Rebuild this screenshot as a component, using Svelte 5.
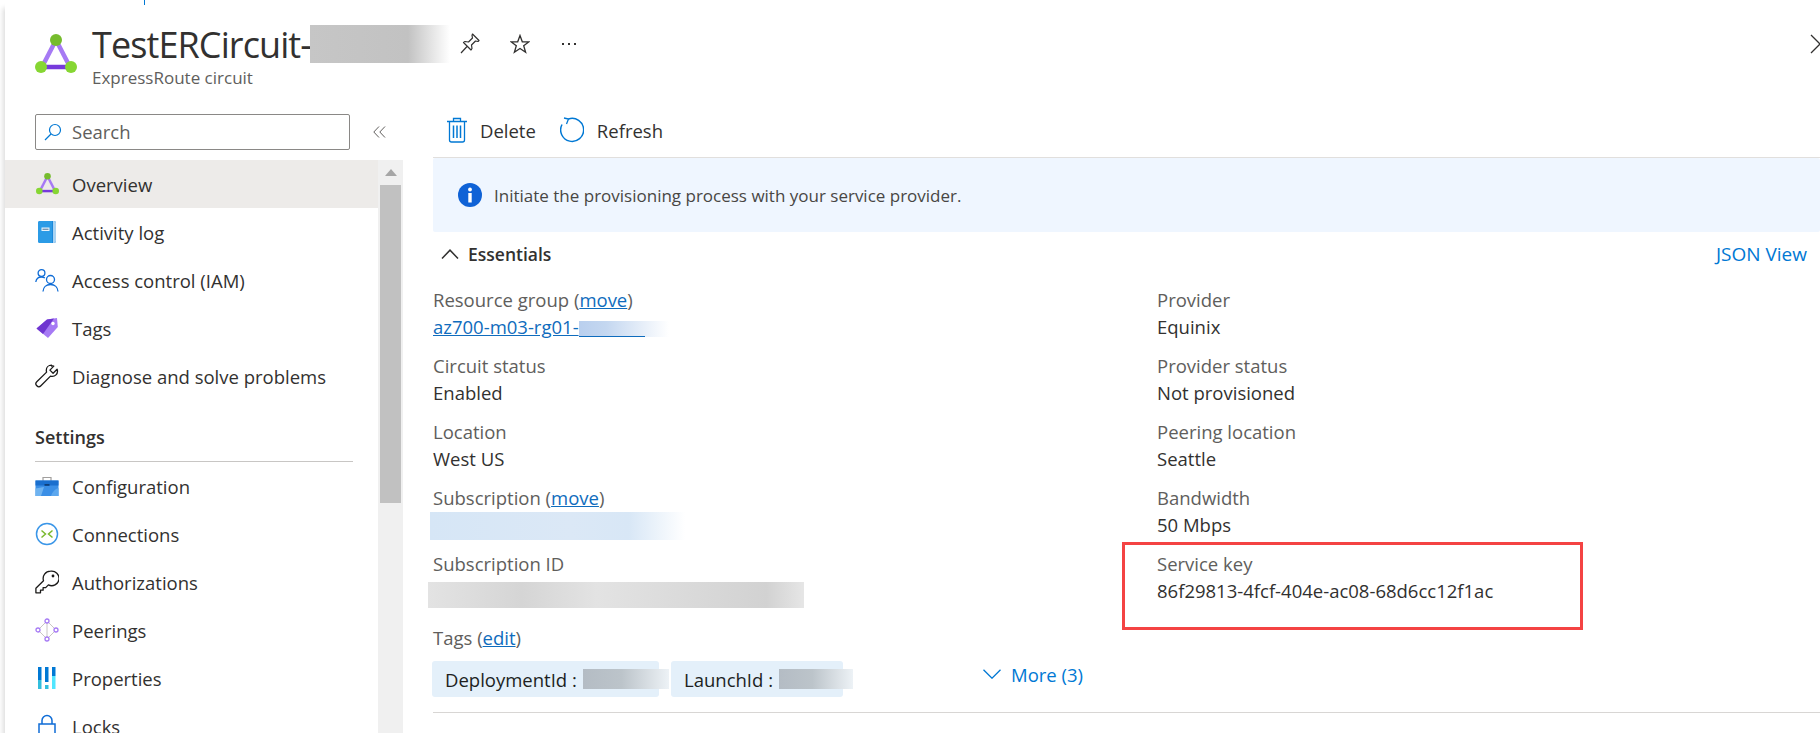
<script>
	const topNav = [
		{ id: "overview", label: "Overview", active: true },
		{ id: "activity", label: "Activity log" },
		{ id: "iam", label: "Access control (IAM)" },
		{ id: "tags", label: "Tags" },
		{ id: "diagnose", label: "Diagnose and solve problems" },
	];
	const settingsNav = [
		{ id: "config", label: "Configuration" },
		{ id: "connections", label: "Connections" },
		{ id: "key", label: "Authorizations" },
		{ id: "peerings", label: "Peerings" },
		{ id: "properties", label: "Properties" },
		{ id: "locks", label: "Locks" },
	];
	const rightFields = [
		{ label: "Provider", value: "Equinix" },
		{ label: "Provider status", value: "Not provisioned" },
		{ label: "Peering location", value: "Seattle" },
		{ label: "Bandwidth", value: "50 Mbps" },
	];
</script>

{#snippet triangle(size)}
	<svg width={size} height={size} viewBox="0 0 42 42">
		<path d="M21 6 7 33" stroke="#a67af4" stroke-width="4.5" />
		<path d="M21 6 35 33" stroke="#a67af4" stroke-width="4.5" />
		<path d="M7 33H35" stroke="#773adc" stroke-width="4.5" />
		<circle cx="21" cy="6" r="6" fill="#76bc2d" />
		<circle cx="6" cy="33" r="6" fill="#86d633" />
		<circle cx="36" cy="33" r="6" fill="#86d633" />
	</svg>
{/snippet}

{#snippet navIcon(id)}
	{#if id === "overview"}
		{@render triangle(23)}
	{:else if id === "activity"}
		<svg width="24" height="24" viewBox="0 0 24 24">
			<path d="M3 3a2 2 0 0 1 2-2h14a2 2 0 0 1 2 2v18a2 2 0 0 1-2 2H5a2 2 0 0 1-2-2z" fill="#1b87d9" />
			<path d="M19 1a2 2 0 0 1 2 2v18a2 2 0 0 1-2 2h-1V1z" fill="#a9d3f2" />
			<path d="M5 1h12v22H5a2 2 0 0 1-2-2V3a2 2 0 0 1 2-2z" fill="#2b9be6" />
			<rect x="6.5" y="7.5" width="8" height="3.5" fill="#e8f3fb" />
			<rect x="7.5" y="8.7" width="6" height="1.1" fill="#5b7fa0" />
		</svg>
	{:else if id === "iam"}
		<svg width="24" height="24" viewBox="0 0 24 24" fill="none" stroke="#0f6cd6" stroke-width="1.3">
			<circle cx="6.5" cy="5" r="3.4" />
			<path d="M0.8 14c.4-3 2.6-5 5.7-5 1.4 0 2.5.4 3.4 1" />
			<circle cx="15.5" cy="11.5" r="4" />
			<path d="M8 23.5c.2-4.200 3.200-7 7.500-7s7.300 2.800 7.500 7" />
		</svg>
	{:else if id === "tags"}
		<svg width="24" height="24" viewBox="0 0 24 24">
			<path d="M1.500 12.500 12 3.500l10 -1.500.800 9L13 22z" fill="#a67af4" />
			<path d="M1.500 12.500 12 3.500l7-1-11 15.500z" fill="#6f35d0" />
			<circle cx="18" cy="7.500" r="1.700" fill="#fff" />
		</svg>
	{:else if id === "diagnose"}
		<svg width="24" height="24" viewBox="0 0 24 24" fill="none" stroke="#1b1a19" stroke-width="1.300" stroke-linejoin="round">
			<path d="M16.500 1.200c-3 0-5.200 2.300-5.200 5.100 0 .7.100 1.200.3 1.800L1.800 17.700a2.900 2.900 0 0 0 0 4.100 2.900 2.900 0 0 0 4.100 0l9.600-9.700c.6.200 1.200.3 1.800.3 2.900 0 5.200-2.300 5.200-5.200 0-.7-.1-1.300-.4-1.900l-4 3.900-3.200-3.100 3.900-4c-.6-.2-1.300-.2-2.300-.1z" />
		</svg>
	{:else if id === "config"}
		<svg width="24" height="24" viewBox="0 0 24 24">
			<path d="M8 7V3.500h8V7" fill="none" stroke="#a19f9d" stroke-width="1.200" />
			<rect x="0.500" y="6.500" width="23" height="15.500" fill="#3b8fe6" />
			<rect x="0.500" y="6.500" width="23" height="5" fill="#1a6fce" />
			<path d="M0.500 14.500 9 13l-3 9H0.500z" fill="#6fb3f0" />
			<path d="M16 22c1-4 4-7 7.500-8v8z" fill="#5ca7ee" />
			<rect x="9.500" y="10" width="5" height="1.800" fill="#0f3f78" />
		</svg>
	{:else if id === "connections"}
		<svg width="24" height="24" viewBox="0 0 24 24" fill="none">
			<circle cx="12" cy="12" r="10.500" stroke="#3a96e8" stroke-width="1.500" />
			<path d="M6.500 8.500 10.500 12l-4 3.500M17.500 8.500 13.500 12l4 3.500" stroke="#7ab82e" stroke-width="1.500" />
		</svg>
	{:else if id === "key"}
		<svg width="24" height="24" viewBox="0 0 24 24" fill="none" stroke="#1b1a19" stroke-width="1.300" stroke-linejoin="round">
			<path d="M15.500 1.200a7.300 7.300 0 0 0-7 9.500L.9 18.300v4.500h4.600v-2.600h2.600v-2.600h2.600l2.700-2.700a7.300 7.300 0 1 0 2.100-13.700z" />
			<circle cx="18" cy="6" r="1.400" fill="#1b1a19" stroke="none" />
		</svg>
	{:else if id === "peerings"}
		<svg width="24" height="24" viewBox="0 0 24 24" fill="none">
			<path d="M12 3 3 12l9 9 9-9zM12 3v18" stroke="#c8c6c4" stroke-width="1" />
			<g stroke="#a67af4" stroke-width="1.300" fill="#fff">
				<circle cx="12" cy="3" r="2" />
				<circle cx="3" cy="12" r="2" />
				<circle cx="21" cy="12" r="2" />
				<circle cx="12" cy="21" r="2" />
			</g>
		</svg>
	{:else if id === "properties"}
		<svg width="24" height="24" viewBox="0 0 24 24">
			<rect x="3" y="1" width="3.500" height="13" fill="#0078d4" />
			<rect x="3" y="14" width="3.500" height="9" fill="#32bedd" />
			<rect x="10" y="1" width="3.500" height="15" fill="#0078d4" />
			<rect x="10" y="19" width="3.500" height="4" fill="#32bedd" />
			<rect x="17" y="1" width="3.500" height="9" fill="#0078d4" />
			<rect x="17" y="10" width="3.500" height="13" fill="#50e6ff" />
		</svg>
	{:else if id === "locks"}
		<svg width="24" height="24" viewBox="0 0 24 24" fill="none" stroke="#0f6cd6" stroke-width="1.500">
			<path d="M7 10V6.500a5 5 0 0 1 10 0V10" />
			<rect x="4" y="10" width="16" height="13" />
		</svg>
	{/if}
{/snippet}

{#snippet navRow(item)}
	<div class="nav-row" class:active={item.active}>
		<span class="nav-icon">{@render navIcon(item.id)}</span>
		<span>{item.label}</span>
	</div>
{/snippet}

<div class="page">
	<span class="crumb-tick"></span>

	<header class="header">
		<span class="logo">{@render triangle(42)}</span>
		<div class="heading">
			<div class="title-row">
				<h1>TestERCircuit-</h1>
				<span class="smudge title-smudge"></span>
				<svg class="pin" width="20" height="22" viewBox="0 0 20 22" fill="none" stroke="#323130" stroke-width="1.200" stroke-linejoin="round">
					<path d="M12.500 1 19 7.500l-1 1-2.500-.5-4 4 .5 3.500-1 1.500L3.500 9.500l1.500-1 3.500.5 4-4-.5-2.500zM7 13.500l-6 6.500" />
				</svg>
				<svg class="star" width="20" height="20" viewBox="0 0 20 20" fill="none" stroke="#323130" stroke-width="1.300" stroke-linejoin="miter">
					<path d="M10 1.500 12.300 7.800H19L13.700 11.800 15.600 18.300 10 14.500 4.400 18.300 6.300 11.800 1 7.800H7.700z" />
				</svg>
				<span class="dots"><i></i><i></i><i></i></span>
			</div>
			<div class="subtitle">ExpressRoute circuit</div>
		</div>
		<svg class="close" width="10" height="20" viewBox="0 0 10 20" fill="none" stroke="#323130" stroke-width="1.300">
			<path d="M1 1 10 10M1 19 10 10" />
		</svg>
	</header>

	<div class="body">
		<aside class="sidebar">
			<div class="search-row">
				<div class="search">
					<svg width="18" height="18" viewBox="0 0 18 18" fill="none" stroke="#0078d4" stroke-width="1.200">
						<circle cx="11" cy="7" r="5.500" />
						<path d="M7 11 1 17" />
					</svg>
					<span>Search</span>
				</div>
				<svg class="collapse" width="13" height="12" viewBox="0 0 13 12" fill="none" stroke="#605e5c" stroke-width="1">
					<path d="M6 .5 .8 6 6 11.500M12 .5 6.800 6 12 11.500" />
				</svg>
			</div>
			<div class="nav-wrap">
				<nav class="nav">
					{#each topNav as item}
						{@render navRow(item)}
					{/each}
					<div class="section">Settings</div>
					{#each settingsNav as item}
						{@render navRow(item)}
					{/each}
				</nav>
				<div class="scrollbar">
					<span class="arrow"></span>
					<span class="thumb"></span>
				</div>
			</div>
		</aside>

		<main class="main">
			<div class="toolbar">
				<button>
					<svg width="20" height="26" viewBox="0 0 20 26" fill="none" stroke="#0078d4" stroke-width="1.300">
						<path d="M0 4.500H20M6.500 4.500V1.500H13.500V4.500M2.500 4.500V23a2 2 0 0 0 2 2H15.500a2 2 0 0 0 2-2V4.500" />
						<path d="M6.500 8.500V21M10 8.500V21M13.500 8.500V21" stroke-width="1.500" />
					</svg>
					Delete
				</button>
				<button>
					<svg width="24" height="26" viewBox="0 0 24 26" fill="none" stroke="#0078d4" stroke-width="1.500">
						<path d="M8.500 2A11.500 11.500 0 1 1 2 7.500" />
						<path d="M4 1 8.500 2 6.500 7" stroke-width="1.300" />
					</svg>
					Refresh
				</button>
			</div>

			<div class="banner">
				<svg width="24" height="24" viewBox="0 0 24 24">
					<circle cx="12" cy="12" r="12" fill="#0f62d6" />
					<circle cx="12" cy="6.500" r="1.900" fill="#fff" />
					<rect x="10.300" y="10" width="3.400" height="9.500" fill="#fff" />
				</svg>
				Initiate the provisioning process with your service provider.
			</div>

			<div class="essentials-head">
				<svg width="18" height="10" viewBox="0 0 18 10" fill="none" stroke="#323130" stroke-width="1.500">
					<path d="M1 9.500 9 1.200l8 8.300" />
				</svg>
				<strong>Essentials</strong>
				<a class="json" href="#json">JSON View</a>
			</div>

			<div class="columns">
				<div class="column">
					<div class="field">
						<div class="label">Resource group (<a href="#move">move</a>)</div>
						<div class="value"><a class="rg" href="#rg">az700-m03-rg01-<span class="rg-smudge"></span></a></div>
					</div>
					<div class="field">
						<div class="label">Circuit status</div>
						<div class="value">Enabled</div>
					</div>
					<div class="field">
						<div class="label">Location</div>
						<div class="value">West US</div>
					</div>
					<div class="field">
						<div class="label">Subscription (<a href="#move">move</a>)</div>
						<div class="smudge sub-smudge"></div>
					</div>
					<div class="field">
						<div class="label">Subscription ID</div>
						<div class="smudge subid-smudge"></div>
					</div>
				</div>
				<div class="column">
					{#each rightFields as field}
						<div class="field">
							<div class="label">{field.label}</div>
							<div class="value">{field.value}</div>
						</div>
					{/each}
					<div class="field boxed">
						<div class="label">Service key</div>
						<div class="value">86f29813-4fcf-404e-ac08-68d6cc12f1ac</div>
						<span class="highlight"></span>
					</div>
				</div>
			</div>

			<div class="label tags-label">Tags (<a href="#edit">edit</a>)</div>
			<div class="tags">
				<span class="tag tag-deploy">DeploymentId :<span class="tag-smudge"></span></span>
				<span class="tag tag-launch">LaunchId :<span class="tag-smudge"></span></span>
				<a class="more" href="#more">
					<svg width="18" height="10" viewBox="0 0 18 10" fill="none" stroke="#0078d4" stroke-width="1.300">
						<path d="M.5 .8 9 9.200 17.500 .8" />
					</svg>
					More (3)
				</a>
			</div>
			<div class="rule"></div>
		</main>
	</div>
</div>

<style>
	:global(body) {
		margin: 0;
		background: #fff;
		font-family: "Open Sans", "Liberation Sans", sans-serif;
		color: #323130;
		overflow: hidden;
	}

	.page {
		position: relative;
		height: 733px;
		margin-left: 5px;
		overflow: hidden;
		background: #fff;
		box-shadow: -2px 8px 5px rgba(0, 0, 0, 0.14);
		font-size: 18.500px;
	}

	.crumb-tick {
		position: absolute;
		left: 139px;
		top: 0;
		width: 1px;
		height: 5px;
		background: #0078d4;
	}

	.header {
		display: flex;
		height: 100px;
		padding-left: 30px;
		box-sizing: border-box;
	}

	.logo {
		margin-top: 34px;
		width: 57px;
		height: 42px;
	}

	.title-row {
		display: flex;
		align-items: center;
		height: 44px;
		margin-top: 22px;
	}

	h1 {
		margin: 0;
		font-size: 36px;
		font-weight: 400;
		letter-spacing: -0.9px;
		color: #323130;
		width: 218px;
		white-space: nowrap;
	}

	.smudge {
		display: block;
	}

	.title-smudge {
		width: 140px;
		height: 38px;
		background: linear-gradient(90deg, #c6c6c6 0%, #c2c2c2 70%, #ffffff 100%);
	}

	.pin {
		margin-left: 10px;
	}

	.star {
		margin-left: 30px;
	}

	.dots {
		display: flex;
		gap: 4px;
		margin-left: 32px;
	}

	.dots i {
		width: 2px;
		height: 2px;
		background: #323130;
	}

	.subtitle {
		font-size: 17px;
		color: #605e5c;
	}

	.close {
		position: absolute;
		right: 0;
		top: 34px;
	}

	.body {
		display: flex;
	}

	.sidebar {
		width: 398px;
		flex: none;
	}

	.search-row {
		display: flex;
		align-items: center;
		gap: 23px;
		padding: 14px 0 10px 30px;
	}

	.search {
		display: flex;
		align-items: center;
		gap: 10px;
		width: 315px;
		height: 36px;
		box-sizing: border-box;
		padding: 0 0 1px 8px;
		border: 1px solid #8a8886;
		border-radius: 2px;
		color: #605e5c;
		line-height: 32px;
	}

	.nav-wrap {
		display: flex;
	}

	.nav {
		width: 373px;
	}

	.nav-row {
		display: flex;
		align-items: center;
		gap: 13px;
		height: 48px;
		padding-left: 30px;
	}

	.nav-row.active {
		background: #edebe9;
	}

	.nav-icon {
		display: flex;
		align-items: center;
		justify-content: center;
		width: 24px;
		height: 24px;
	}

	.section {
		height: 60px;
		margin: 2px 25px 0 30px;
		box-sizing: border-box;
		padding-top: 23px;
		line-height: 25px;
		border-bottom: 1px solid #c8c6c4;
		font-weight: 600;
		font-size: 18px;
	}

	.scrollbar {
		display: flex;
		flex-direction: column;
		align-items: center;
		width: 25px;
		background: #f0f0f0;
	}

	.arrow {
		margin-top: 9px;
		border: 6px solid transparent;
		border-top: 0;
		border-bottom: 7px solid #a6a6a6;
	}

	.thumb {
		width: 21px;
		height: 318px;
		margin-top: 9px;
		background: #c1c1c1;
	}

	.main {
		flex: 1;
		min-width: 0;
		padding-left: 30px;
	}

	.toolbar {
		display: flex;
		align-items: center;
		height: 58px;
		box-sizing: border-box;
		padding: 3px 0 0 14px;
		border-bottom: 1px solid #e1dfdd;
		gap: 24px;
	}

	button {
		display: flex;
		align-items: center;
		gap: 13px;
		padding: 0;
		border: 0;
		background: none;
		font: inherit;
		color: #323130;
	}

	.banner {
		display: flex;
		align-items: center;
		gap: 12px;
		height: 74px;
		padding-left: 25px;
		background: #eff6ff;
		border-radius: 2px;
		font-size: 17px;
		color: #484644;
	}

	.essentials-head {
		display: flex;
		align-items: center;
		height: 44px;
		padding-left: 8px;
		gap: 9px;
	}

	.essentials-head strong {
		font-weight: 600;
		font-size: 17.500px;
	}

	a {
		color: #0f6cbd;
	}

	.json {
		margin-left: auto;
		margin-right: 13px;
		font-size: 19px;
		text-decoration: none;
		color: #0078d4;
	}

	.columns {
		display: flex;
		margin-top: 10px;
	}

	.column {
		flex: none;
		width: 724px;
	}

	.field {
		position: relative;
		height: 66px;
	}

	.label {
		height: 27px;
		line-height: 27px;
		color: #605e5c;
	}

	.value {
		height: 27px;
		line-height: 27px;
		color: #323130;
	}

	.rg {
		display: inline-block;
		white-space: nowrap;
	}

	.rg-smudge {
		display: inline-block;
		width: 90px;
		height: 16px;
		vertical-align: -3px;
		background:
			linear-gradient(#0f6cbd, #0f6cbd) left bottom / 66px 1px no-repeat,
			linear-gradient(90deg, #b9cfee 0%, #c4d7f0 30%, #ffffff 100%);
	}

	.sub-smudge {
		width: 255px;
		height: 28px;
		margin: 1px 0 0 -3px;
		background: linear-gradient(90deg, #d6e6f6 0%, #dbe8f6 55%, #d8e7f6 78%, #ffffff 100%);
	}

	.subid-smudge {
		width: 376px;
		height: 26px;
		margin: 5px 0 0 -5px;
		background: linear-gradient(90deg, #e3e3e3 0%, #d5d5d5 25%, #e3e3e3 45%, #d2d2d2 90%, #e6e6e6 100%);
	}

	.highlight {
		position: absolute;
		left: -35px;
		top: -8px;
		width: 461px;
		height: 88px;
		box-sizing: border-box;
		border: 3px solid #f44343;
	}

	.tags-label {
		margin-top: 8px;
	}

	.tags {
		display: flex;
		align-items: center;
		gap: 12px;
		margin: 10px 0 0 -1px;
		height: 36px;
	}

	.tag {
		display: flex;
		align-items: center;
		height: 36px;
		box-sizing: border-box;
		padding-left: 13px;
		background: #e4f0fa;
		border-radius: 3px;
		color: #201f1e;
		gap: 6px;
		white-space: nowrap;
	}

	.tag-deploy {
		width: 227px;
	}

	.tag-launch {
		width: 172px;
	}

	.tag-smudge {
		flex: none;
		height: 20px;
		background: linear-gradient(90deg, #b4bcc4 0%, #bcc4ca 45%, #edf2f6 100%);
	}

	.tag-deploy .tag-smudge {
		width: 86px;
	}

	.tag-launch .tag-smudge {
		width: 74px;
	}

	.more {
		display: flex;
		align-items: center;
		gap: 10px;
		margin-left: 128px;
		margin-top: -10px;
		text-decoration: none;
		color: #0078d4;
	}

	.rule {
		height: 1px;
		margin-top: 15px;
		background: #d8d6d4;
	}
</style>
